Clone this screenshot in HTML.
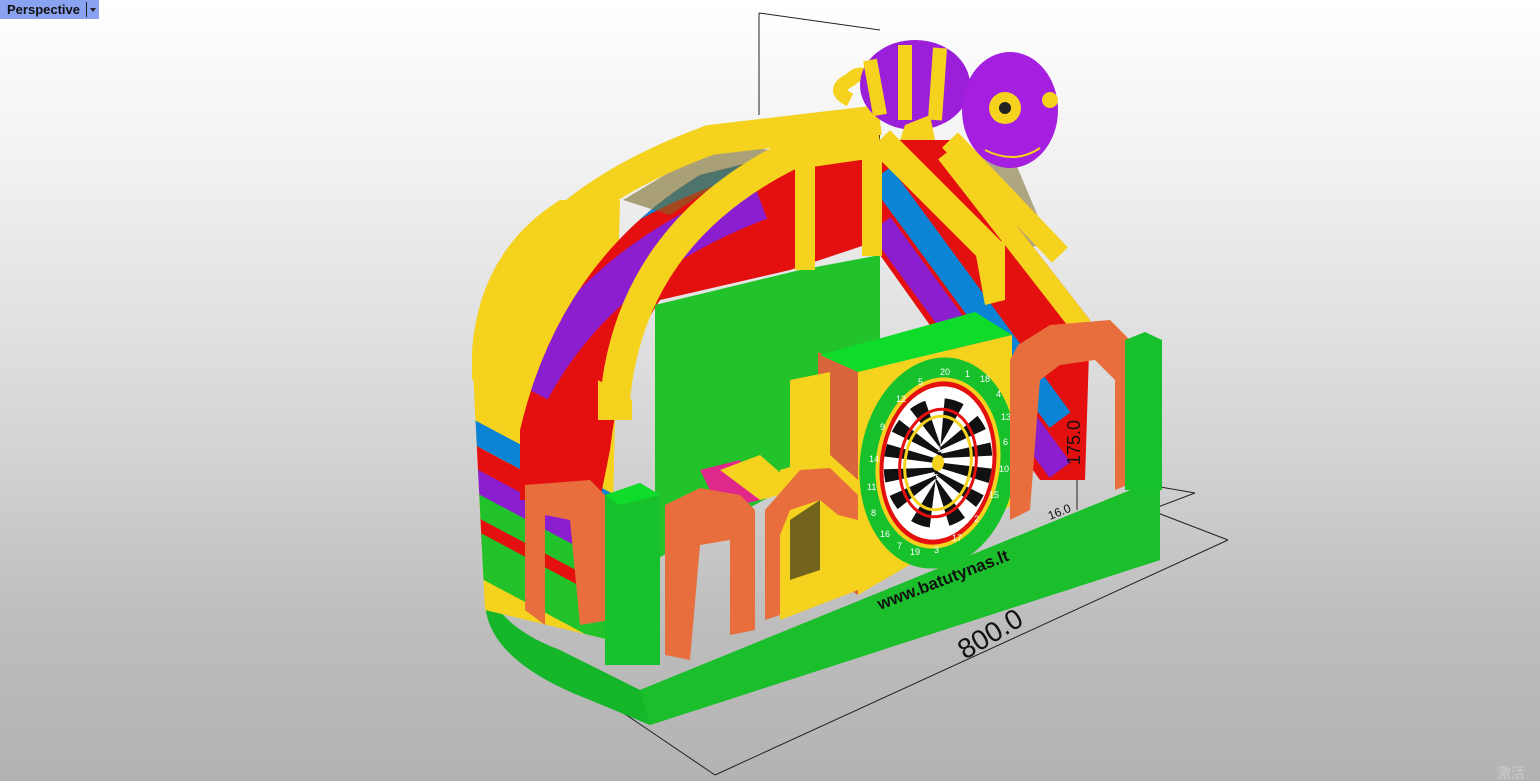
<!DOCTYPE html>
<html><head><meta charset="utf-8"><style>
html,body{margin:0;padding:0;width:1540px;height:781px;overflow:hidden}
body{background:linear-gradient(#ffffff 0%,#f2f2f2 20%,#d6d6d6 55%,#bdbdbd 80%,#b3b3b3 100%);font-family:"Liberation Sans",sans-serif;position:relative}
#tab{position:absolute;left:0;top:0;width:99px;height:19px;background:#8aa3f0;font-size:13px;font-weight:bold;color:#111;line-height:19px}
#tab span{position:absolute;left:7px;top:0}
#tab i{position:absolute;left:86px;top:2px;width:1px;height:15px;background:#222}
#tab b{position:absolute;left:90px;top:8px;border-left:3px solid transparent;border-right:3px solid transparent;border-top:4px solid #222}
svg{position:absolute;left:0;top:0}
</style></head><body>
<svg width="1540" height="781" viewBox="0 0 1540 781">
<defs>
<clipPath id="lw"><path d="M472,350 Q480,250 560,200 L620,200 L610,640 L485,610 Z"/></clipPath>
<clipPath id="mid"><path d="M520,430 Q560,260 700,175 L800,150 L870,150 L880,240 L790,270 L660,300 Q620,360 610,450 L600,500 L520,500 Z"/></clipPath>
<clipPath id="rs"><path d="M880,140 L950,140 L1090,320 L1085,480 L1040,480 L880,255 Z"/></clipPath>
</defs>
<g stroke="#222" stroke-width="1" fill="none">
<line x1="759" y1="13" x2="759" y2="115"/><line x1="759" y1="13" x2="880" y2="30"/>
<line x1="560" y1="670" x2="715" y2="775"/><line x1="715" y1="775" x2="1228" y2="540"/>
<line x1="1150" y1="510" x2="1228" y2="540"/><line x1="1150" y1="510" x2="1195" y2="493"/>
<line x1="1120" y1="480" x2="1195" y2="493"/>
<line x1="1077" y1="430" x2="1077" y2="510"/>
</g>
<path d="M485,560 Q480,620 560,650 L640,690 L1160,478 L1160,560 L650,725 L590,700 Q485,660 485,600 Z" fill="#15b62a"/>
<path d="M640,690 L1160,478 L1160,560 L650,725 Z" fill="#1bbf2c"/>
<g clip-path="url(#lw)" stroke-width="22" fill="none">
<rect x="460" y="190" width="170" height="460" fill="#f5d21e" stroke="none"/>
<path d="M470,430 L620,510" stroke="#0b84d6"/>
<path d="M470,455 L620,535" stroke="#e41010"/>
<path d="M470,478 L620,558" stroke="#8b1fd0"/>
<path d="M470,502 L620,582" stroke="#22c22a"/>
<path d="M470,526 L620,606" stroke="#e41010"/>
<path d="M470,550 L620,630" stroke="#22c22a" stroke-width="40"/>
<path d="M470,405 L620,485" stroke="#f5d21e"/>
</g>
<g clip-path="url(#mid)" fill="none" stroke-width="22">
<rect x="500" y="140" width="400" height="380" fill="#e41010" stroke="none"/>
<path d="M520,300 Q600,210 740,165" stroke="#0b84d6"/>
<path d="M530,390 Q600,260 760,200" stroke="#8b1fd0" stroke-width="40"/>
</g>
<path d="M623,200 L720,142 L770,150 L670,215 Z" fill="#7a6a28" opacity=".6"/>
<path d="M950,150 L1010,150 L1050,245 L990,250 Z" fill="#7a6a28" opacity=".55"/>
<path d="M820,120 L880,112 L880,140 L800,150 Z" fill="#111"/>
<g clip-path="url(#rs)" fill="none" stroke-width="26">
<rect x="870" y="130" width="230" height="360" fill="#e41010" stroke="none"/>
<path d="M880,175 L1060,420" stroke="#0b84d6"/>
<path d="M880,225 L1060,470" stroke="#8b1fd0"/>
<path d="M950,150 L1090,330" stroke="#f5d21e" stroke-width="30"/>
</g>
<path d="M488,360 Q505,215 710,140 L880,120" fill="none" stroke="#f5d21e" stroke-width="30"/>
<path d="M615,400 Q630,235 790,155 L880,142" fill="none" stroke="#f5d21e" stroke-width="30"/>
<path d="M472,350 L472,380 L505,380 L505,360 Z" fill="#f5d21e"/>
<path d="M598,380 L598,420 L632,420 L632,400 Z" fill="#f5d21e"/>
<path d="M655,305 L800,270 L880,255 L880,455 L800,480 L655,560 Z" fill="#22c22a"/>
<rect x="795" y="150" width="20" height="120" fill="#f5d21e"/>
<rect x="862" y="148" width="20" height="108" fill="#f5d21e"/>
<path d="M880,140 L995,255" stroke="#f5d21e" stroke-width="28"/>
<path d="M950,140 L1060,255" stroke="#f5d21e" stroke-width="22"/>
<path d="M975,250 L1005,240 L1005,300 L985,305 Z" fill="#f5d21e"/>
<path d="M818,352 L858,372 L858,595 L818,570 Z" fill="#d9653a"/>
<path d="M820,355 L975,312 L1012,335 L858,372 Z" fill="#0fdc2a"/>
<path d="M858,372 L1012,335 L1012,505 L858,595 Z" fill="#f5d21e"/>
<g transform="translate(938,463) rotate(8)">
<ellipse rx="78" ry="106" fill="#16c12c"/>
<ellipse rx="62" ry="86" fill="#f5d21e"/>
<ellipse rx="58" ry="82" fill="#e41010"/>
<ellipse rx="54" ry="77" fill="#fff"/>
<ellipse rx="27" ry="38" fill="none" stroke="#111" stroke-width="54" stroke-dasharray="8.5 8.5"/>
<ellipse rx="38" ry="54" fill="none" stroke="#e41010" stroke-width="3"/>
<ellipse rx="33" ry="47" fill="none" stroke="#f5d21e" stroke-width="3"/>
<ellipse rx="6" ry="8" fill="#f5d21e"/>
</g>
<g font-size="9" fill="#fff" font-family="Liberation Sans,sans-serif">
<text x="940" y="375">20</text><text x="965" y="377">1</text><text x="980" y="382">18</text><text x="996" y="397">4</text>
<text x="1001" y="420">13</text><text x="1003" y="445">6</text><text x="999" y="472">10</text><text x="989" y="498">15</text>
<text x="974" y="522">2</text><text x="952" y="541">17</text><text x="934" y="553">3</text><text x="910" y="555">19</text>
<text x="897" y="549">7</text><text x="880" y="537">16</text><text x="871" y="516">8</text><text x="867" y="490">11</text>
<text x="869" y="462">14</text><text x="880" y="430">9</text><text x="896" y="402">12</text><text x="918" y="385">5</text>
</g>
<path d="M790,380 L830,372 L830,460 L790,470 Z" fill="#f5d21e"/>
<path d="M700,470 L740,460 L760,500 L720,510 Z" fill="#e0288a"/>
<path d="M720,470 L760,455 L800,490 L760,500 Z" fill="#f5d21e"/>
<path d="M780,470 L830,455 L858,480 L858,590 L780,620 Z" fill="#f5d21e"/>
<path d="M525,485 L590,480 L610,500 L610,620 L580,625 L570,520 L545,515 L545,625 L525,610 Z" fill="#e86f3d"/>
<path d="M665,505 L700,488 L740,495 L755,510 L755,630 L730,635 L730,540 L700,545 L690,660 L665,655 Z" fill="#e86f3d"/>
<path d="M765,510 L800,470 L830,468 L858,495 L858,520 L838,515 L820,500 L790,510 L780,535 L780,615 L765,620 Z" fill="#e86f3d"/>
<path d="M1018,345 L1050,325 L1110,320 L1140,350 L1140,480 L1115,490 L1115,380 L1095,360 L1060,365 L1040,380 L1030,510 L1010,520 L1010,360 Z" fill="#e86f3d"/>
<path d="M790,520 L820,500 L820,570 L790,580 Z" fill="#1a1a1a" opacity=".6"/>
<path d="M605,495 L640,483 L660,495 L660,665 L605,665 Z" fill="#16c12c"/>
<path d="M605,495 L640,483 L660,495 L620,505 Z" fill="#0fdc2a"/>
<path d="M1125,340 L1145,332 L1162,340 L1162,490 L1125,490 Z" fill="#16c12c"/>
<path d="M850,100 Q830,90 850,80 Q860,70 870,78" fill="none" stroke="#f5d21e" stroke-width="14"/>
<ellipse cx="915" cy="85" rx="55" ry="45" fill="#9b1fd8"/>
<path d="M870,60 L880,115 M905,45 L905,120 M940,48 L935,120" stroke="#f5d21e" stroke-width="14"/>
<ellipse cx="1010" cy="110" rx="48" ry="58" fill="#a41fe0"/>
<circle cx="1005" cy="108" r="16" fill="#f5d21e"/><circle cx="1005" cy="108" r="6" fill="#222"/>
<path d="M985,150 Q1015,165 1040,148" fill="none" stroke="#f5d21e" stroke-width="2"/>
<circle cx="1050" cy="100" r="8" fill="#f5d21e"/>
<path d="M905,125 L930,115 L935,140 L900,140 Z" fill="#f5d21e"/>
<text x="0" y="0" font-size="17" font-weight="bold" fill="#111" transform="translate(880,610) rotate(-21)">www.batutynas.lt</text>
<text x="0" y="0" font-size="28" fill="#111" transform="translate(965,660) rotate(-31)">800.0</text>
<text x="0" y="0" font-size="18" fill="#111" transform="translate(1080,465) rotate(-90)">175.0</text>
<text x="0" y="0" font-size="12" fill="#111" transform="translate(1050,520) rotate(-22)">16.0</text>
<text x="1497" y="778" font-size="14" fill="#ccc">激活</text>
</svg>
<div id="tab"><span>Perspective</span><i></i><b></b></div>
</body></html>
